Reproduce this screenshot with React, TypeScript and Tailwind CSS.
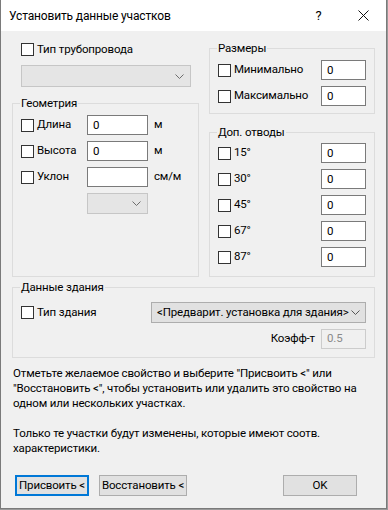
import React from 'react';

const Check = () => (
  <span className="inline-block w-[13px] h-[13px] shrink-0 bg-white border border-[#333333]" />
);

const Chevron = ({ color = '#6d6d6d' }: { color?: string }) => (
  <svg width="9" height="5" viewBox="0 0 9 5" fill="none">
    <path d="M0.5 0.5 L4.5 4.5 L8.5 0.5" stroke={color} strokeWidth="1" />
  </svg>
);

const Input = ({ value, w = 'w-[45px]' }: { value: string; w?: string }) => (
  <div className={`${w} h-[20px] shrink-0 bg-white border border-[#7a7a7a] flex items-center pl-[5px] leading-[16px]`}>
    {value}
  </div>
);

function Group({ title, className = '', children }: { title: string; className?: string; children: React.ReactNode }) {
  return (
    <div className={`border border-[#dcdcdc] flex flex-col ${className}`}>
      <span className="-mt-[9px] ml-[7px] px-[1px] self-start bg-[#f0f0f0] leading-[16px]">{title}</span>
      {children}
    </div>
  );
}

export default function App() {
  const bends = ['15°', '30°', '45°', '67°', '87°'];

  return (
    <div className="w-[388px] h-[510px] bg-[#9a9a9a] text-[11.5px] tracking-[-0.15px] text-black whitespace-nowrap font-['Roboto','Liberation_Sans',sans-serif]">
      <div className="w-[387px] h-[509px] flex flex-col bg-[#f0f0f0] border-l border-r border-b border-[#7a7a7a]">
        {/* title bar */}
        <div className="h-[31px] shrink-0 bg-white flex items-center pl-[8px]">
          <span className="text-[12px]">Установить данные участков</span>
          <div className="ml-auto flex h-full">
            <span className="w-[46px] flex items-center justify-center text-[13px] pl-[3px]">?</span>
            <span className="w-[46px] flex items-center justify-center">
              <svg width="11" height="11" viewBox="0 0 11 11">
                <path d="M0.5 0.5 L10.5 10.5 M10.5 0.5 L0.5 10.5" stroke="#111" strokeWidth="1" />
              </svg>
            </span>
          </div>
        </div>

        <div className="flex flex-col px-[11px] pt-[10px]">
          <div className="flex gap-[10px]">
            {/* left column */}
            <div className="w-[188px] flex flex-col">
              <div className="h-[16px] pl-[9px] flex items-center gap-[3px]">
                <Check />
                <span className="leading-[16px]">Тип трубопровода</span>
              </div>
              <div className="ml-[9px] mt-[8px] w-[170px] h-[22px] bg-[#e5e5e5] border border-[#c6c6c6] flex items-center justify-end pr-[6px]">
                <Chevron />
              </div>
              <Group title="Геометрия" className="mt-[16px] flex-1">
                <div className="mt-[4px] pl-[8px] flex flex-col gap-[6px]">
                  {[
                    ['Длина', '0', 'м'],
                    ['Высота', '0', 'м'],
                    ['Уклон', '', 'см/м'],
                  ].map(([label, val, unit]) => (
                    <div key={label} className="h-[20px] flex items-center">
                      <div className="w-[66px] flex items-center gap-[3px]">
                        <Check />
                        <span>{label}</span>
                      </div>
                      <Input value={val} w="w-[61px]" />
                      <span className="ml-[6px]">{unit}</span>
                    </div>
                  ))}
                  <div className="ml-[66px] w-[61px] h-[21px] bg-[#e5e5e5] border border-[#c6c6c6] flex items-center justify-end pr-[6px]">
                    <Chevron />
                  </div>
                </div>
              </Group>
            </div>

            {/* right column */}
            <div className="w-[167px] mt-[7px] flex flex-col">
              <Group title="Размеры" className="pb-[7px]">
                <div className="mt-[4px] pl-[8px] flex flex-col gap-[6px]">
                  {['Минимально', 'Максимально'].map((label) => (
                    <div key={label} className="h-[20px] flex items-center">
                      <div className="w-[103px] flex items-center gap-[3px]">
                        <Check />
                        <span>{label}</span>
                      </div>
                      <Input value="0" />
                    </div>
                  ))}
                </div>
              </Group>
              <Group title="Доп. отводы" className="mt-[18px] flex-1 pb-[9px]">
                <div className="mt-[3px] pl-[8px] flex flex-col gap-[6px]">
                  {bends.map((label) => (
                    <div key={label} className="h-[20px] flex items-center">
                      <div className="w-[103px] flex items-center gap-[3px]">
                        <Check />
                        <span>{label}</span>
                      </div>
                      <Input value="0" />
                    </div>
                  ))}
                </div>
              </Group>
            </div>
          </div>

          <Group title="Данные здания" className="mt-[10px] pb-[8px]">
            <div className="mt-[7px] pl-[8px] pr-[8px] h-[21px] flex items-center justify-between">
              <div className="flex items-center gap-[3px]">
                <Check />
                <span>Тип здания</span>
              </div>
              <div className="w-[215px] h-[21px] bg-[#e1e1e1] border border-[#adadad] flex items-center pl-[5px] pr-[5px]">
                <span>&lt;Предварит. установка для здания&gt;</span>
                <span className="ml-auto">
                  <Chevron color="#555" />
                </span>
              </div>
            </div>
            <div className="mt-[6px] pr-[8px] flex items-center justify-end">
              <span className="mr-[6px]">Коэфф-т</span>
              <div className="w-[45px] h-[20px] border border-[#cccccc] flex items-center pl-[5px] text-[#8a8a8a]">0.5</div>
            </div>
          </Group>

          <p className="mt-[8px] leading-[15px] pl-[1px]">
            Отметьте желаемое свойство и выберите "Присвоить &lt;" или
            <br />
            "Восстановить &lt;", чтобы установить или удалить это свойство на
            <br />
            одном или нескольких участках.
          </p>
          <p className="mt-[15px] leading-[15px] pl-[1px]">
            Только те участки будут изменены, которые имеют соотв.
            <br />
            характеристики.
          </p>

          <div className="mt-[19px] flex items-center">
            <button className="ml-[3px] w-[74px] h-[21px] bg-[#e1e1e1] border-2 border-[#0078d7] flex items-center justify-center">
              Присвоить &lt;
            </button>
            <button className="ml-[10px] w-[88px] h-[21px] bg-[#e1e1e1] border border-[#adadad] flex items-center justify-center">
              Восстановить &lt;
            </button>
            <button className="ml-auto mr-[18px] w-[74px] h-[21px] bg-[#e1e1e1] border border-[#adadad] flex items-center justify-center">
              OK
            </button>
          </div>
        </div>
      </div>
    </div>
  );
}
